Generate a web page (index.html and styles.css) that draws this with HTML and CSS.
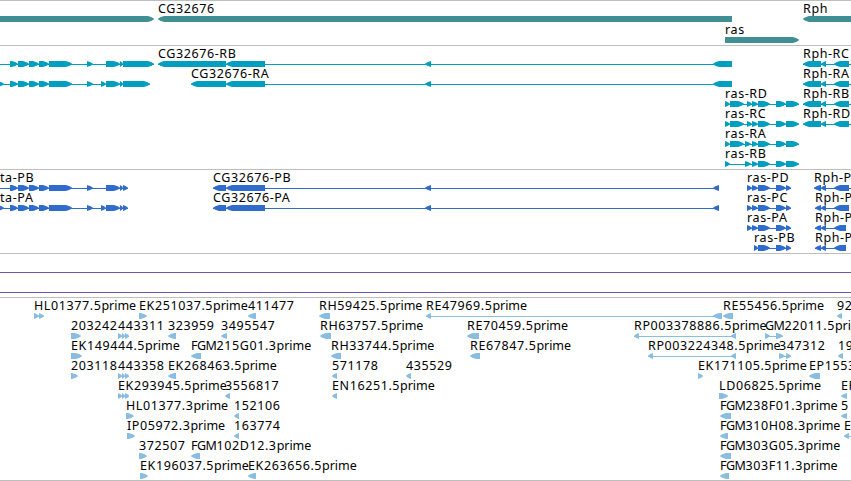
FILE: index.html
```html
<!DOCTYPE html>
<html>
<head>
  <meta charset="utf-8">
  <title>Genome Browser</title>
  <link rel="stylesheet" href="styles.css">
</head>
<body>
  <div class="browser">
    <svg class="track genes" id="genes"></svg>
    <svg class="track transcripts" id="transcripts"></svg>
    <svg class="track proteins" id="proteins"></svg>
    <div class="track spans">
      <div class="span-line"></div>
      <div class="span-line"></div>
    </div>
    <svg class="track ests" id="ests"></svg>
  </div>

  <script src="script.js"></script>
</body>
</html>
```
FILE: styles.css
```css
body {
  margin: 0;
  background: #fff;
  overflow: hidden;
}

.browser {
  display: flex;
  flex-direction: column;
  height: 480px;
  border-bottom: 1px solid #bebebe;
}

.track {
  display: block;
  box-sizing: border-box;
  width: 100%;
  border-top: 1px solid #bebebe;
  overflow: hidden;
}

/* Track heights */
.genes {
  height: 45px;
  color: #3f8f95;
}

.transcripts {
  height: 124px;
  color: #009fc0;
}

.proteins {
  height: 84px;
  color: #306ccc;
}

.spans {
  height: 44px;
  padding-top: 18px;
}

.ests {
  height: 183px;
  color: #8abddf;
}

/* Features */
.label {
  font-family: "Noto Sans", sans-serif;
  font-size: 12.5px;
  letter-spacing: 0.6px;
  fill: #000;
}

.label .prefix {
  letter-spacing: -0.5px;
}

.label .suffix {
  letter-spacing: -0.05px;
}

.exon,
.intron {
  fill: currentColor;
}

.span-line {
  height: 1px;
  margin-bottom: 19px;
  background: #7654ac;
}
```
FILE: script.js
```js
const SVG = 'http://www.w3.org/2000/svg';
const BOX = 6;
const TIP = 6;

// shared exon groups
const left = [[10, 18], [18, 29], [29, 39], [39, 49], [49, 72], [87, 93]];
const cg = [[226, 265], [425, 431]];
const rasEnd = [[758, 770], [776, 786], [786, 799]];
const rasPepEnd = [[758, 770], [776, 786], [786, 791]];
const rph = [[803, 821], [821, 826], [834, 849], [860, 870]];
const triple = [[118, 122], [122, 125], [125, 129]];

// row, label, label x, direction, exons
const tracks = {
  genes: { pitch: 21, features: [
    [0, '', 0, 1, [[-10, 154]]],
    [0, 'CG32676', 158, -1, [[158, 732]]],
    [0, 'Rph', 803, -1, [[803, 870]]],
    [1, 'ras', 725, 1, [[725, 799]]]
  ]},
  transcripts: { pitch: 20, features: [
    [0, '', 0, 1, [[-20, -10], ...left, [106, 120], [120, 123], [123, 154]]],
    [1, '', 0, 1, [[-4, 4], ...left, [101, 106], [106, 120], [120, 123], [123, 150]]],
    [0, 'CG32676-RB', 158, -1, [[158, 226], ...cg, [713, 732]]],
    [1, 'CG32676-RA', 191, -1, [[191, 226], ...cg, [713, 732]]],
    [2, 'ras-RD', 725, 1, [[725, 730], [730, 744], [747, 752], [752, 758], ...rasEnd]],
    [3, 'ras-RC', 725, 1, [[725, 730], [730, 744], [747, 752], [752, 758], ...rasEnd]],
    [4, 'ras-RA', 725, 1, [[725, 730], [730, 744], [745, 751], [752, 758], ...rasEnd]],
    [5, 'ras-RB', 725, 1, [[725, 730], [745, 751], [752, 758], ...rasEnd]],
    [0, 'Rph-RC', 803, -1, rph],
    [1, 'Rph-RA', 803, -1, rph],
    [2, 'Rph-RB', 803, -1, rph],
    [3, 'Rph-RD', 803, -1, rph]
  ]},
  proteins: { pitch: 20, features: [
    [0, 'ta-PB', 0, 1, [[-20, -10], ...left, [106, 120], [120, 123], [123, 128]]],
    [1, 'ta-PA', 0, 1, [[-4, 4], ...left, [101, 106], [106, 120], [120, 123], [123, 128]]],
    [0, 'CG32676-PB', 213, -1, [[213, 226], ...cg, [713, 719]]],
    [1, 'CG32676-PA', 213, -1, [[213, 226], ...cg, [713, 719]]],
    [0, 'ras-PD', 747, 1, [[747, 752], [752, 758], ...rasPepEnd]],
    [1, 'ras-PC', 747, 1, [[747, 752], [752, 758], ...rasPepEnd]],
    [2, 'ras-PA', 747, 1, [[747, 752], [752, 758], ...rasPepEnd]],
    [3, 'ras-PB', 754, 1, [[754, 758], ...rasPepEnd]],
    [0, 'Rph-P', 814, -1, [[814, 821], [821, 826], [834, 849], [860, 870]]],
    [1, 'Rph-P', 815, -1, [[815, 821], [821, 826], [834, 849]]],
    [2, 'Rph-P', 815, -1, [[815, 821], [821, 826], [834, 846]]],
    [3, 'Rph-P', 815, -1, [[815, 821], [821, 826], [834, 846]]]
  ]},
  ests: { pitch: 20, features: [
    [0, 'HL01377.5prime', 34, 1, [[34, 39], [39, 44]]],
    [0, 'EK251037.5prime', 139, 1, [[139, 147]]],
    [0, '411477', 248, -1, [[248, 256]]],
    [0, 'RH59425.5prime', 319, -1, [[319, 330]]],
    [0, 'RE47969.5prime', 426, -1, [[426, 431], [713, 722]]],
    [0, 'RE55456.5prime', 723, -1, [[723, 733]]],
    [0, '92', 837, -1, [[837, 842]]],
    [1, '203242', 71, 1, [[71, 81]]],
    [1, '443311', 118, 1, triple],
    [1, '323959', 168, -1, [[168, 176]]],
    [1, '3495547', 221, -1, [[221, 227]]],
    [1, 'RH63757.5prime', 320, -1, [[320, 331]]],
    [1, 'RE70459.5prime', 467, -1, [[467, 479]]],
    [1, 'RP003378886.5prime', 634, -1, [[634, 639], [731, 736]]],
    [1, 'GM22011.5pri', 765, 1, [[765, 770], [776, 783]]],
    [2, 'EK149444.5prime', 71, 1, [[71, 82]]],
    [2, 'FGM215G01.3prime', 191, -1, [[191, 201]]],
    [2, 'RH33744.5prime', 331, -1, [[331, 341]]],
    [2, 'RE67847.5prime', 470, -1, [[470, 480]]],
    [2, 'RP003224348.5prime', 648, -1, [[648, 653], [731, 736]]],
    [2, '347312', 779, 1, [[779, 785], [786, 791]]],
    [2, '19', 838, -1, [[838, 843]]],
    [3, '203118', 71, 1, [[71, 78]]],
    [3, '443358', 118, 1, triple],
    [3, 'EK268463.5prime', 168, -1, [[168, 176]]],
    [3, '571178', 332, -1, [[332, 337]]],
    [3, '435529', 406, -1, [[406, 411]]],
    [3, 'EK171105.5prime', 698, 1, [[698, 703]]],
    [3, 'EP1553', 809, -1, [[809, 820]]],
    [4, 'EK293945.5prime', 118, 1, triple],
    [4, '3556817', 225, -1, [[225, 230]]],
    [4, 'EN16251.5prime', 332, -1, [[332, 337]]],
    [4, 'LD06825.5prime', 719, 1, [[719, 728]]],
    [4, 'EP', 841, -1, [[841, 847]]],
    [5, 'HL01377.3prime', 126, 1, [[126, 134]]],
    [5, '152106', 234, -1, [[234, 239]]],
    [5, 'FGM238F01.3prime', 720, -1, [[720, 731]]],
    [5, '5', 841, -1, [[841, 847]]],
    [6, 'IP05972.3prime', 127, 1, [[127, 135]]],
    [6, '163774', 234, -1, [[234, 239]]],
    [6, 'FGM310H08.3prime', 720, -1, [[720, 728]]],
    [6, 'E', 844, -1, [[844, 849], [860, 870]]],
    [7, '372507', 139, 1, [[139, 147]]],
    [7, 'FGM102D12.3prime', 191, -1, [[191, 200]]],
    [7, 'FGM303G05.3prime', 720, -1, [[720, 731]]],
    [8, 'EK196037.5prime', 140, 1, [[140, 148]]],
    [8, 'EK263656.5prime', 248, -1, [[248, 256]]],
    [8, 'FGM303F11.3prime', 720, -1, [[720, 729]]]
  ]}
};

function add(svg, tag, attrs) {
  const el = document.createElementNS(SVG, tag);
  for (const key in attrs) {
    el.setAttribute(key, attrs[key]);
  }
  svg.appendChild(el);
  return el;
}

function drawExon(svg, start, end, y, dir) {
  const tip = Math.min(TIP, end - start);
  const tail = dir > 0 ? start : end;
  const head = dir > 0 ? end : start;
  const neck = head - dir * tip;
  const shoulder = head - dir * tip * 0.4;
  const points = [
    [tail, y], [neck, y], [shoulder, y + 1.3], [head, y + 2.7],
    [head, y + 3.3], [shoulder, y + BOX - 1.3], [neck, y + BOX], [tail, y + BOX]
  ];
  add(svg, 'polygon', { class: 'exon', points: points.join(' ') });
}

// the wide GM prefix and the "prime" ending are set tighter than the digits
function drawLabel(svg, label, x, y) {
  const text = add(svg, 'text', { class: 'label', x: x, y: y });
  const [, prefix, id, suffix] = label.match(/^(F?GM)?(.*?)(pri(?:me)?)?$/);
  if (prefix) {
    add(text, 'tspan', { class: 'prefix' }).textContent = prefix;
  }
  add(text, 'tspan', {}).textContent = id;
  if (suffix) {
    add(text, 'tspan', { class: 'suffix' }).textContent = suffix;
  }
}

for (const id in tracks) {
  const svg = document.getElementById(id);
  const { pitch, features } = tracks[id];

  features.forEach(([row, label, x, dir, exons]) => {
    const y = 15 + row * pitch;
    const first = exons[0][0];
    const last = exons[exons.length - 1][1];

    if (exons.length > 1) {
      add(svg, 'rect', { class: 'intron', x: first, y: y + 3, width: last - first, height: 1 });
    }
    exons.forEach(([start, end]) => drawExon(svg, start, end, y, dir));

    if (label) {
      drawLabel(svg, label, x, y - 3);
    }
  });
}
```
